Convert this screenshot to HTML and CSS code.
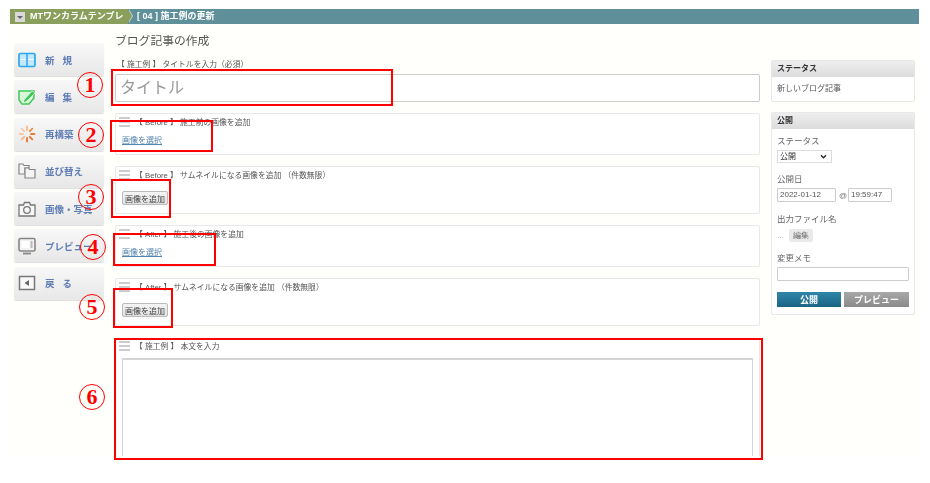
FILE: index.html
```html
<!DOCTYPE html>
<html lang="ja">
<head>
    <meta charset="UTF-8">
    <meta name="viewport" content="width=device-width, initial-scale=1.0">
    <title>ブログ記事の作成</title>
    <link rel="stylesheet" href="styles.css">
</head>
<body>
    <div class="page">
        <div class="crumbs">
            <div class="crumb-site">
                <span class="crumb-icon"></span>
                <span>MTワンカラムテンプレ</span>
            </div>
            <div class="crumb-title">[ 04 ] 施工例の更新</div>
        </div>

        <div class="layout">
            <nav class="menu">
                <a class="menu-item">
                    <svg class="menu-icon" viewBox="0 0 18 18"><rect x="1" y="2.500" width="16" height="13" rx="1.500" fill="#c4e8fb" stroke="#2aa8ee" stroke-width="1.700"/><path d="M9 2.500v13" stroke="#2aa8ee" stroke-width="1.500"/><path d="M2.500 8.500h5M10.500 8.500h5" stroke="#fff" stroke-width="1"/></svg>
                    <span class="wide">新規</span>
                </a>
                <a class="menu-item">
                    <svg class="menu-icon" viewBox="0 0 18 18"><path d="M1 3h15v7l-5 6H4L1 12z" fill="#d8f6d8" stroke="#40c95a" stroke-width="1.500"/><path d="M6 12l8-9 3 2-8 8-4 2z" fill="#40c95a" stroke="#fff" stroke-width="0.600"/></svg>
                    <span class="wide">編集</span>
                </a>
                <a class="menu-item">
                    <svg class="menu-icon" viewBox="0 0 18 18"><g stroke-width="1.800" stroke-linecap="round"><path d="M9 1.500v3.500" stroke="#f3b98c"/><path d="M14.300 3.700l-2.500 2.500" stroke="#ec8a3c"/><path d="M16.500 9H13" stroke="#ec7f2e"/><path d="M14.300 14.300l-2.500-2.500" stroke="#e8742a"/><path d="M9 16.500V13" stroke="#e8742a"/><path d="M3.700 14.300l2.500-2.500" stroke="#f3b98c"/><path d="M1.500 9H5" stroke="#f5c8a4"/><path d="M3.700 3.700l2.500 2.500" stroke="#f5c8a4"/></g></svg>
                    <span>再構築</span>
                </a>
                <a class="menu-item">
                    <svg class="menu-icon" viewBox="0 0 18 18" fill="#f4f4f4" stroke="#858585" stroke-width="1.200"><path d="M1 2h4l1 1.500h5V6H7v6H1z"/><path d="M7 6h3.500l1 1.500H17V16H7z"/></svg>
                    <span>並び替え</span>
                </a>
                <a class="menu-item">
                    <svg class="menu-icon" viewBox="0 0 18 18" fill="none" stroke="#777" stroke-width="1.300"><path d="M1 5h4.500l1-2.500h5L12.500 5H17v11H1z" fill="#f7f7f7"/><circle cx="9" cy="10" r="3.300"/></svg>
                    <span>画像・写真</span>
                </a>
                <a class="menu-item">
                    <svg class="menu-icon" viewBox="0 0 18 18"><rect x="1" y="1.500" width="16" height="12.500" rx="1.500" fill="#f2f2f2" stroke="#868686" stroke-width="1.600"/><rect x="3.500" y="4" width="8" height="7" fill="#fff"/><path d="M13.500 4v7" stroke="#bbb" stroke-width="2"/><path d="M5 16.500h8" stroke="#868686" stroke-width="1.800"/></svg>
                    <span>プレビュー</span>
                </a>
                <a class="menu-item">
                    <svg class="menu-icon" viewBox="0 0 18 18"><rect x="1.500" y="2.500" width="15" height="13" fill="#f8f8f8" stroke="#777" stroke-width="1.500"/><path d="M11 6v6L6.500 9z" fill="#666"/></svg>
                    <span class="wide">戻る</span>
                </a>
            </nav>

            <main class="main">
                <h1 class="page-title">ブログ記事の作成</h1>
                <p class="title-label">【 施工例 】 タイトルを入力（必須）</p>
                <div class="title-input">タイトル</div>

                <section class="field field-short">
                    <div class="field-head"><span class="handle"></span>【 Before 】 施工前の画像を追加</div>
                    <a class="pick-link">画像を選択</a>
                </section>
                <section class="field field-tall">
                    <div class="field-head"><span class="handle"></span>【 Before 】 サムネイルになる画像を追加 （件数無限）</div>
                    <button class="add-button">画像を追加</button>
                </section>
                <section class="field field-short">
                    <div class="field-head"><span class="handle"></span>【 After 】 施工後の画像を追加</div>
                    <a class="pick-link">画像を選択</a>
                </section>
                <section class="field field-tall">
                    <div class="field-head"><span class="handle"></span>【 After 】 サムネイルになる画像を追加 （件数無限）</div>
                    <button class="add-button">画像を追加</button>
                </section>
                <section class="field field-body">
                    <div class="field-head"><span class="handle"></span>【 施工例 】 本文を入力</div>
                    <div class="body-editor"></div>
                </section>
            </main>

            <aside class="side">
                <div class="panel panel-status">
                    <h2 class="panel-head">ステータス</h2>
                    <div class="panel-body">新しいブログ記事</div>
                </div>
                <div class="panel">
                    <h2 class="panel-head">公開</h2>
                    <div class="panel-body">
                        <div class="side-label">ステータス</div>
                        <div class="fake-select">公開<svg class="chevron" viewBox="0 0 8 6"><path d="M1 1.500l3 3 3-3" fill="none" stroke="#222" stroke-width="1.500"/></svg></div>
                        <div class="side-label label-date">公開日</div>
                        <div class="date-row">
                            <span class="side-input date-input">2022-01-12</span>
                            <span class="at">@</span>
                            <span class="side-input time-input">19:59:47</span>
                        </div>
                        <div class="side-label label-file">出力ファイル名</div>
                        <div class="file-row"><span class="dots">...</span><button class="edit-button">編集</button></div>
                        <div class="side-label label-memo">変更メモ</div>
                        <div class="side-input memo-input"></div>
                        <div class="actions">
                            <button class="publish">公開</button>
                            <button class="preview">プレビュー</button>
                        </div>
                    </div>
                </div>
            </aside>
        </div>
    </div>

    <!-- 赤枠と番号の注釈 -->
    <div class="mark box-1"></div>
    <div class="mark box-2"></div>
    <div class="mark box-3"></div>
    <div class="mark box-4"></div>
    <div class="mark box-5"></div>
    <div class="mark box-6"></div>
    <span class="num num-1">1</span>
    <span class="num num-2">2</span>
    <span class="num num-3">3</span>
    <span class="num num-4">4</span>
    <span class="num num-5">5</span>
    <span class="num num-6">6</span>
</body>
</html>
```
FILE: styles.css
```css
* {
    box-sizing: border-box;
}

body {
    margin: 0;
    background: #fff;
    font-family: "Liberation Sans", "Noto Sans CJK JP", sans-serif;
    color: #555;
    font-size: 8px;
    height: 483px;
    overflow: hidden;
}

.page {
    width: 909px;
    height: 447px;
    margin: 9px 0 0 10px;
    background: #fffffb;
    filter: blur(0.4px);
    overflow: hidden;
}

/* header */
.crumbs {
    display: flex;
    height: 15px;
    background: #5f8f99;
    color: #fff;
    font-weight: bold;
    font-size: 9px;
    line-height: 15px;
}

.crumb-site {
    position: relative;
    display: flex;
    align-items: center;
    gap: 5px;
    width: 118px;
    padding-left: 5px;
    background: #8a9f5b;
}

.crumb-site::before {
    content: "";
    position: absolute;
    left: 119px;
    top: 0;
    border-left: 4px solid #c5d6d2;
    border-top: 7.500px solid transparent;
    border-bottom: 7.500px solid transparent;
}

.crumb-site::after {
    content: "";
    position: absolute;
    left: 118px;
    top: 0;
    border-left: 4px solid #8a9f5b;
    border-top: 7.500px solid transparent;
    border-bottom: 7.500px solid transparent;
}

.crumb-icon {
    position: relative;
    width: 10px;
    height: 10px;
    background: #d9d9d9;
}

.crumb-icon::after {
    content: "";
    position: absolute;
    left: 2px;
    top: 4px;
    border-top: 3px solid #666;
    border-left: 3px solid transparent;
    border-right: 3px solid transparent;
}

.crumb-title {
    padding-left: 9px;
}

/* columns */
.layout {
    display: flex;
    padding: 9px 0 0 4px;
}

.menu {
    display: flex;
    flex-direction: column;
    gap: 4.300px;
    width: 90px;
    margin: 10px 11px 0 0;
}

.menu-item {
    display: flex;
    align-items: center;
    gap: 9px;
    height: 33px;
    padding-left: 4px;
    background: linear-gradient(to bottom, #f8f8f8, #e7e7e7);
    border-radius: 2px;
    box-shadow: 0 1px 1px #ddd;
    color: #5f7db5;
    font-size: 9.500px;
    font-weight: bold;
    white-space: nowrap;
}

.menu-icon {
    width: 18px;
    height: 18px;
    flex: none;
}

.wide {
    letter-spacing: 8px;
}

.main {
    width: 645px;
    margin-right: 11px;
}

.page-title {
    margin: 0;
    font-size: 11.800px;
    font-weight: normal;
    line-height: 17px;
    color: #555;
}

.title-label {
    margin: 10px 0 0;
    padding-left: 2px;
    line-height: 9px;
    font-size: 7.800px;
}

.title-input {
    height: 28px;
    margin-top: 5px;
    padding-left: 4px;
    background: #fff;
    border: 1px solid #ccc;
    border-radius: 2px;
    color: #999;
    font-size: 16px;
    line-height: 26px;
}

.field {
    margin-top: 11px;
    padding: 2px 6px;
    background: #fff;
    border: 1px solid #e8e8e8;
    border-radius: 2px;
}

.field-short {
    height: 42px;
}

.field-tall {
    height: 48px;
}

.field-body {
    height: 119px;
    margin-top: 12px;
    padding-top: 1px;
    overflow: hidden;
}

.field-head {
    display: flex;
    align-items: center;
    gap: 5px;
    height: 11px;
    white-space: pre;
    font-size: 7.800px;
}

.handle {
    width: 11px;
    height: 10px;
    margin-left: -3px;
    border-top: 2px solid #ccc;
    border-bottom: 2px solid #ccc;
    background: linear-gradient(#ccc, #ccc) center / 100% 2px no-repeat;
}

.pick-link {
    display: block;
    margin-top: 9px;
    color: #5584ad;
    text-decoration: underline;
    font-size: 8px;
    line-height: 10px;
}

.add-button {
    display: block;
    width: 46px;
    height: 14px;
    margin-top: 11px;
    padding: 0;
    background: linear-gradient(to bottom, #f4f4f4, #e2e2e2);
    border: 1px solid #bbb;
    border-radius: 2px;
    color: #444;
    font: 8px "Liberation Sans", "Noto Sans CJK JP", sans-serif;
}

.body-editor {
    width: 631px;
    height: 110px;
    margin-top: 7px;
    background: #fff;
    border: 1px solid #d5d5d5;
    border-top-width: 2px;
}

/* right column */
.side {
    width: 144px;
    margin-top: 27px;
}

.panel {
    background: #fff;
    border: 1px solid #e8e8e8;
    border-radius: 2px;
}

.panel-status {
    height: 42px;
    margin-bottom: 10px;
}

.panel-head {
    margin: 0;
    height: 16px;
    padding-left: 5px;
    background: linear-gradient(to bottom, #eee, #dcdcdc);
    color: #333;
    font-size: 8px;
    line-height: 16px;
}

.panel-body {
    padding: 6px 5px 7px;
    font-size: 8px;
    line-height: 11px;
}

.side-label {
    font-size: 8.500px;
    line-height: 12px;
    color: #666;
}

.label-date {
    margin-top: 10px;
}

.label-file {
    margin-top: 11px;
}

.label-memo {
    margin-top: 10px;
}

.fake-select {
    display: flex;
    align-items: center;
    justify-content: space-between;
    width: 55px;
    height: 13px;
    margin-top: 3px;
    padding: 0 4px 0 2px;
    border: 1px solid #ddd;
    color: #333;
    font-size: 8px;
}

.chevron {
    width: 7px;
    height: 5px;
}

.date-row {
    display: flex;
    align-items: center;
    gap: 3px;
    margin-top: 3px;
}

.side-input {
    display: block;
    height: 14px;
    padding-left: 2px;
    background: #fff;
    border: 1px solid #ccc;
    border-radius: 1px;
    line-height: 12px;
    font-size: 8px;
}

.date-input {
    width: 59px;
}

.time-input {
    width: 44px;
}

.at {
    width: 6px;
    color: #777;
    font-size: 8px;
}

.file-row {
    display: flex;
    align-items: center;
    margin-top: 4px;
    color: #aaa;
}

.dots {
    width: 12px;
}

.edit-button {
    width: 24px;
    height: 13px;
    padding: 0;
    background: #eaeaea;
    border: none;
    border-radius: 2px;
    color: #666;
    font-size: 7.500px;
}

.memo-input {
    width: 132px;
    margin-top: 3px;
}

.actions {
    display: flex;
    gap: 3px;
    margin-top: 11px;
}

.actions button {
    width: 64px;
    height: 15px;
    padding: 0;
    border: none;
    color: #fff;
    font: bold 9px "Liberation Sans", "Noto Sans CJK JP", sans-serif;
}

.publish {
    background: linear-gradient(to bottom, #2f86a8, #1a6485);
}

.actions .preview {
    width: 65px;
    background: linear-gradient(to bottom, #a8a8a8, #8a8a8a);
}

/* annotations */
.mark {
    position: absolute;
    border: 2px solid #f00;
}

.box-1 { left: 111px; top: 69px; width: 282px; height: 37px; }
.box-2 { left: 110px; top: 120px; width: 103px; height: 32px; }
.box-3 { left: 111px; top: 179px; width: 60px; height: 39px; }
.box-4 { left: 113px; top: 233px; width: 103px; height: 33px; }
.box-5 { left: 113px; top: 288px; width: 60px; height: 40px; }
.box-6 { left: 114px; top: 338px; width: 649px; height: 122px; }

.num {
    position: absolute;
    width: 26px;
    height: 26px;
    border: 1.500px solid #f00;
    border-radius: 50%;
    color: #f00;
    font-family: "Liberation Serif", serif;
    font-weight: bold;
    font-size: 22px;
    line-height: 23px;
    text-align: center;
}

.num-1 { left: 77px; top: 72px; }
.num-2 { left: 78px; top: 122px; }
.num-3 { left: 78px; top: 184px; }
.num-4 { left: 80px; top: 234px; }
.num-5 { left: 79px; top: 294px; }
.num-6 { left: 79px; top: 384px; }
```
